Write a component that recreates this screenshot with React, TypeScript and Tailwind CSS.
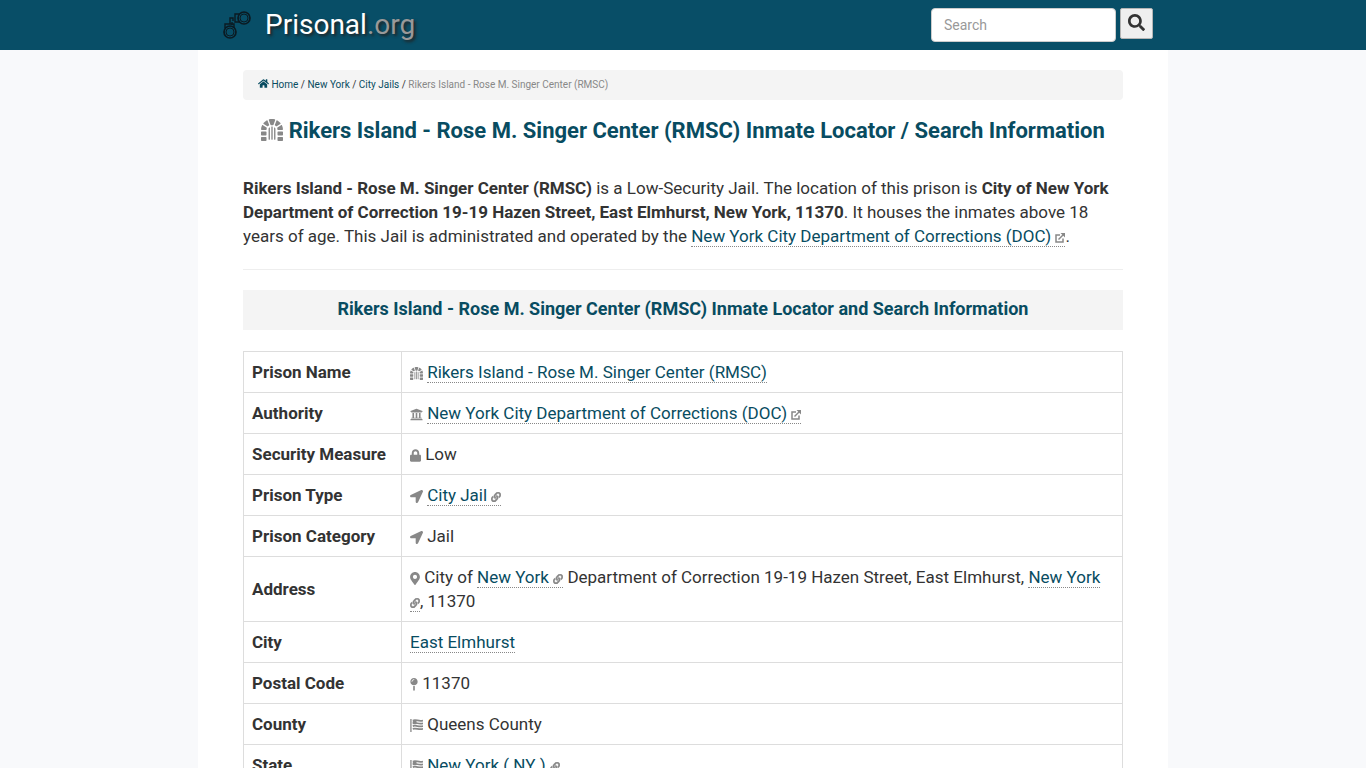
import type { ReactNode } from "react";
import {
  FaDungeon,
  FaHome,
  FaLink,
  FaLocationArrow,
  FaLock,
  FaMapMarkerAlt,
  FaMapPin,
  FaSearch,
  FaUniversity,
} from "react-icons/fa";

const PRISON_NAME = "Rikers Island - Rose M. Singer Center (RMSC)";
const AUTHORITY = "New York City Department of Corrections (DOC)";

const ICON_CLASS = "inline-block size-[13px] align-[-2px] text-[#888888]";

const BREADCRUMBS = [
  { label: "New York", href: "#new-york" },
  { label: "City Jails", href: "#city-jails" },
];

interface DetailRow {
  label: string;
  value: ReactNode;
}

const DETAILS: DetailRow[] = [
  {
    label: "Prison Name",
    value: (
      <>
        <FaDungeon className={ICON_CLASS} /> <TextLink href="#prison">{PRISON_NAME}</TextLink>
      </>
    ),
  },
  {
    label: "Authority",
    value: (
      <>
        <FaUniversity className={ICON_CLASS} />{" "}
        <TextLink href="#authority" icon="external">
          {AUTHORITY}
        </TextLink>
      </>
    ),
  },
  {
    label: "Security Measure",
    value: (
      <>
        <FaLock className="inline-block h-[13px] w-[11px] align-[-2px] text-[#888888]" /> Low
      </>
    ),
  },
  {
    label: "Prison Type",
    value: (
      <>
        <FaLocationArrow className={ICON_CLASS} />{" "}
        <TextLink href="#city-jails" icon="link">
          City Jail
        </TextLink>
      </>
    ),
  },
  {
    label: "Prison Category",
    value: (
      <>
        <FaLocationArrow className={ICON_CLASS} /> Jail
      </>
    ),
  },
  {
    label: "Address",
    value: (
      <>
        <FaMapMarkerAlt className="inline-block h-[13px] w-[10px] align-[-2px] text-[#888888]" /> City of{" "}
        <TextLink href="#new-york" icon="link">
          New York
        </TextLink>{" "}
        Department of Correction 19-19 Hazen Street, East Elmhurst,{" "}
        <TextLink href="#new-york" icon="link">
          New York
        </TextLink>
        , 11370
      </>
    ),
  },
  {
    label: "City",
    value: <TextLink href="#east-elmhurst">East Elmhurst</TextLink>,
  },
  {
    label: "Postal Code",
    value: (
      <>
        <FaMapPin className="inline-block h-[13px] w-[8px] align-[-2px] text-[#888888]" /> 11370
      </>
    ),
  },
  {
    label: "County",
    value: (
      <>
        <FlagIcon /> Queens County
      </>
    ),
  },
  {
    label: "State",
    value: (
      <>
        <FlagIcon />{" "}
        <TextLink href="#new-york" icon="link">
          New York ( NY )
        </TextLink>
      </>
    ),
  },
];

export default function App() {
  return (
    <div className="min-h-screen bg-[#f8f9fb] font-[Roboto,sans-serif] text-[17px] leading-6 text-[#333333]">
      <SiteHeader />
      <main className="mx-auto max-w-[970px] bg-white px-[45px] pt-5">
        <Breadcrumb />

        <h1 className="mt-[19px] text-center text-[22px] leading-6 font-bold text-[#084c61]">
          <FaDungeon className="inline-block size-[22px] align-[-3px] text-[#888888]" /> {PRISON_NAME} Inmate
          Locator / Search Information
        </h1>

        <p className="mt-[33px]">
          <strong>{PRISON_NAME}</strong> is a Low-Security Jail. The location of this prison is{" "}
          <strong>
            City of New York Department of Correction 19-19 Hazen Street, East Elmhurst, New York, 11370
          </strong>
          . It houses the inmates above 18 years of age. This Jail is administrated and operated by the{" "}
          <TextLink href="#authority" icon="external">
            {AUTHORITY}
          </TextLink>
          .
        </p>

        <hr className="mt-[21px] mb-5 border-[#eeeeee]" />

        <h2 className="bg-[#f4f4f4] pt-[7px] pb-[9px] text-center text-[18px] leading-6 font-bold text-[#084c61]">
          {PRISON_NAME} Inmate Locator and Search Information
        </h2>

        <table className="mt-[21px] w-full border-collapse">
          <tbody>
            {DETAILS.map((row) => (
              <tr key={row.label}>
                <th
                  scope="row"
                  className="w-[158px] border border-[#dddddd] p-2 text-left align-middle font-bold whitespace-nowrap"
                >
                  {row.label}
                </th>
                <td className="border border-[#dddddd] p-2">{row.value}</td>
              </tr>
            ))}
          </tbody>
        </table>
      </main>
    </div>
  );
}

function SiteHeader() {
  return (
    <header className="h-[50px] bg-[#084e67]">
      <div className="mx-auto flex max-w-[970px] items-start justify-between pr-[15px] pl-6">
        <a href="#home" className="flex h-[50px] items-center gap-[13px]">
          <HandcuffsIcon />
          <span className="text-[28px] leading-8 text-white [text-shadow:2px_2px_3px_#222222]">
            Prisonal<span className="text-[#999999]">.org</span>
          </span>
        </a>
        <form className="flex items-start gap-1 pt-2" role="search" onSubmit={(e) => e.preventDefault()}>
          <input
            type="search"
            aria-label="Search"
            placeholder="Search"
            className="h-[34px] w-[185px] rounded-sm border border-[#cccccc] bg-white px-3 text-[14px] placeholder:text-[#999999]"
          />
          <button
            type="submit"
            aria-label="Submit search"
            className="flex h-[31px] w-[33px] items-center justify-center rounded-xs border border-[#b5b5b5] bg-[#efefef] pb-[2px]"
          >
            <FaSearch className="size-[17px]" />
          </button>
        </form>
      </div>
    </header>
  );
}

function Breadcrumb() {
  return (
    <nav aria-label="Breadcrumb" className="rounded-sm bg-[#f4f4f4] px-[15px] py-[5px] text-[10px] leading-5">
      <a href="#home" className="text-[#084c61]">
        <FaHome className="inline-block size-[11px] align-[-1px]" /> Home
      </a>
      {BREADCRUMBS.map((crumb) => (
        <span key={crumb.href}>
          {" / "}
          <a href={crumb.href} className="text-[#084c61]">
            {crumb.label}
          </a>
        </span>
      ))}
      {" / "}
      <span className="text-[#888888]">{PRISON_NAME}</span>
    </nav>
  );
}

interface TextLinkProps {
  href: string;
  icon?: "link" | "external";
  children: ReactNode;
}

function TextLink({ href, icon, children }: TextLinkProps) {
  return (
    <a href={href} className="border-b border-dotted border-[#888888] text-[#084c61]">
      {children}
      {icon === "link" && (
        <>
          {" "}
          <FaLink className="inline-block size-[10px] align-[-1px] stroke-current stroke-[20] text-[#888888]" />
        </>
      )}
      {icon === "external" && (
        <>
          {" "}
          <ExternalIcon />
        </>
      )}
    </a>
  );
}

function ExternalIcon() {
  return (
    <svg
      viewBox="0 0 20 20"
      className="inline-block size-[10px] align-[-1px] text-[#888888]"
      fill="none"
      stroke="currentColor"
      strokeWidth="3"
      aria-hidden="true"
    >
      <path d="M10 4H2v14h14v-7" />
      <path d="M7 13 18 2" />
      <path d="M11 0h9v9z" fill="currentColor" stroke="none" />
    </svg>
  );
}

function FlagIcon() {
  return (
    <svg
      viewBox="0 0 14 14"
      className="inline-block size-[13px] align-[-2px] text-[#888888]"
      fill="none"
      stroke="currentColor"
      aria-hidden="true"
    >
      <path d="M1 0v14" strokeWidth="1.4" />
      <path
        d="M3 1.6c4-1.4 6 1.4 11 0M3 4.6c4-1.4 6 1.4 11 0M3 7.6c4-1.4 6 1.4 11 0M3 10.6c4-1.4 6 1.4 11 0"
        strokeWidth="1.9"
      />
      <path d="M3 1.6h4v4H3z" fill="currentColor" stroke="none" />
    </svg>
  );
}

function HandcuffsIcon() {
  return (
    <svg
      viewBox="0 0 30 30"
      className="size-[30px] text-[#0b1a22]"
      fill="none"
      stroke="currentColor"
      aria-hidden="true"
    >
      <circle cx="22" cy="8" r="6" strokeWidth="1.7" />
      <circle cx="22" cy="8" r="4" strokeWidth="1" />
      <circle cx="8" cy="22" r="6" strokeWidth="1.7" />
      <circle cx="8" cy="22" r="4" strokeWidth="1" />
      <path d="M17 4h-4v8h5" strokeWidth="1.4" />
      <path d="M3 18v-4h9v4" strokeWidth="1.4" />
      <path d="M8 14V8h3v3M10 12v3" strokeWidth="1.4" />
    </svg>
  );
}
